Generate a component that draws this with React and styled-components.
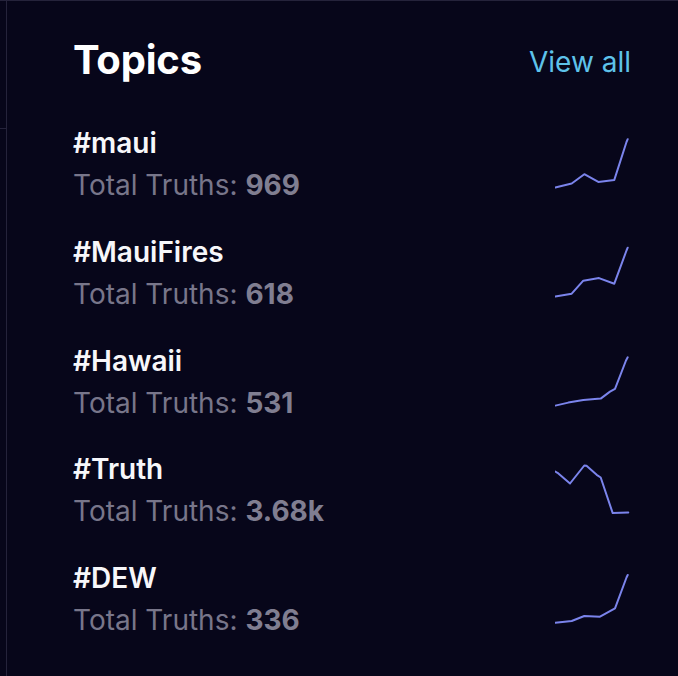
import React from 'react'
import styled, { createGlobalStyle } from 'styled-components'

const GlobalStyle = createGlobalStyle`
  html, body {
    margin: 0;
    padding: 0;
    background: #07061a;
  }
  body {
    font-family: Inter, "Noto Sans", sans-serif;
    -webkit-font-smoothing: antialiased;
  }
`

// points are [x, y] inside the 76x84 row box of each chart
const topics = [
  { tag: '#maui', total: '969', points: [[0.3, 64.5], [16.7, 60.5], [29.3, 51.2], [43.3, 58.9], [59.3, 56.9], [71.5, 19], [72.7, 16.2]] },
  { tag: '#MauiFires', total: '618', points: [[0.3, 64.4], [16.7, 61.7], [28.3, 48.7], [44, 46.1], [59.3, 51.7], [71.5, 18.5], [72.7, 15.7]] },
  { tag: '#Hawaii', total: '531', points: [[0.3, 64.6], [13.3, 61.6], [28.3, 58.9], [45.7, 57.6], [55, 50.6], [60, 47.9], [71, 19.5], [72.7, 16.3]] },
  { tag: '#Truth', total: '3.68k', points: [[0.3, 22.5], [2.5, 23.8], [15, 34.5], [29.3, 16.5], [31.5, 16.8], [41.7, 25.8], [45.7, 28.5], [57.7, 64.1], [73.3, 63.5]] },
  { tag: '#DEW', total: '336', points: [[0.3, 64.7], [16.7, 63], [29.3, 58], [45, 58.7], [60, 50.3], [71.5, 19.5], [72.7, 17]] },
]

const Sparkline = ({ points }) => (
  <Chart width="76" height="84" viewBox="0 0 76 84">
    <polyline
      points={points.map((p) => p.join(',')).join(' ')}
      fill="none"
      stroke="#7b84ec"
      strokeWidth="2"
      strokeLinejoin="round"
      strokeLinecap="round"
    />
  </Chart>
)

const App = () => {
  return (
    <Page>
      <GlobalStyle />
      <Rail>
        <RailBlock />
      </Rail>
      <Panel>
        <Header>
          <Title>Topics</Title>
          <ViewAll href="#">View all</ViewAll>
        </Header>
        <List>
          {topics.map((t) => (
            <Row key={t.tag}>
              <Info>
                <Tag>{t.tag}</Tag>
                <Total>
                  Total Truths: <b>{t.total}</b>
                </Total>
              </Info>
              <Sparkline points={t.points} />
            </Row>
          ))}
        </List>
      </Panel>
    </Page>
  )
}

export default App

const Page = styled.div`
  display: flex;
  width: 678px;
  height: 676px;
  box-sizing: border-box;
  border-top: 1px solid #25233b;
  background: #07061a;
  overflow: hidden;
`

const Rail = styled.div`
  width: 6px;
  flex-shrink: 0;
`

const RailBlock = styled.div`
  height: 127px;
  border-bottom: 1px solid #25233b;
`

const Panel = styled.div`
  flex: 1;
  border-left: 1px solid #25233b;
  padding: 35px 47px 0 66px;
`

const Header = styled.div`
  display: flex;
  align-items: center;
  justify-content: space-between;
  height: 48px;
`

const Title = styled.h2`
  margin: 0;
  font-size: 40px;
  line-height: 48px;
  font-weight: 700;
  color: #ffffff;
  letter-spacing: -0.2px;
`

const ViewAll = styled.a`
  font-size: 28px;
  line-height: 34px;
  color: #5ec2ea;
  text-decoration: none;
  margin-top: 4px;
`

const List = styled.div`
  display: flex;
  flex-direction: column;
  gap: 24.8px;
  margin-top: 39px;
`

const Row = styled.div`
  display: flex;
  align-items: stretch;
  justify-content: space-between;
  height: 84px;
`

const Info = styled.div`
  display: flex;
  flex-direction: column;
`

const Tag = styled.div`
  font-size: 28px;
  line-height: 40px;
  font-weight: 600;
  color: #f7f7fa;
`

const Total = styled.div`
  font-size: 28px;
  line-height: 44px;
  color: #78768a;

  b {
    font-weight: 700;
    color: #807e91;
  }
`

const Chart = styled.svg`
  display: block;
  flex-shrink: 0;
`
